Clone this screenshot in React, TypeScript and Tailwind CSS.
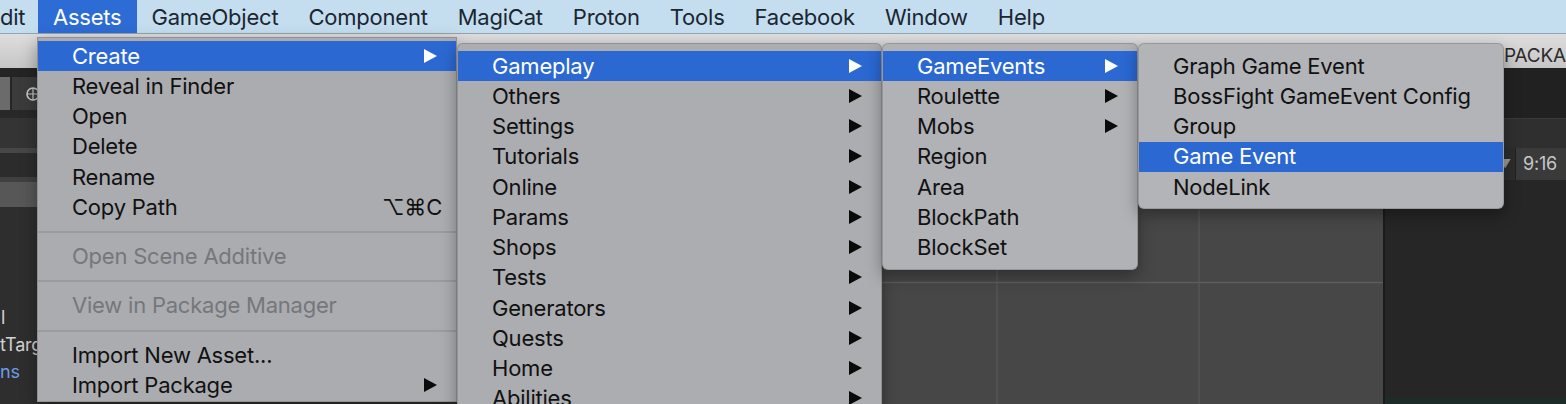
import React from "react";

type Entry =
  | "sep"
  | {
      label: string;
      sub?: boolean;
      active?: boolean;
      disabled?: boolean;
      shortcut?: string;
    };

const assetsMenu: Entry[] = [
  { label: "Create", sub: true, active: true },
  { label: "Reveal in Finder" },
  { label: "Open" },
  { label: "Delete" },
  { label: "Rename" },
  { label: "Copy Path", shortcut: "⌥⌘C" },
  "sep",
  { label: "Open Scene Additive", disabled: true },
  "sep",
  { label: "View in Package Manager", disabled: true },
  "sep",
  { label: "Import New Asset..." },
  { label: "Import Package", sub: true },
];

const createMenu: Entry[] = [
  { label: "Gameplay", sub: true, active: true },
  { label: "Others", sub: true },
  { label: "Settings", sub: true },
  { label: "Tutorials", sub: true },
  { label: "Online", sub: true },
  { label: "Params", sub: true },
  { label: "Shops", sub: true },
  { label: "Tests", sub: true },
  { label: "Generators", sub: true },
  { label: "Quests", sub: true },
  { label: "Home", sub: true },
  { label: "Abilities", sub: true },
];

const gameplayMenu: Entry[] = [
  { label: "GameEvents", sub: true, active: true },
  { label: "Roulette", sub: true },
  { label: "Mobs", sub: true },
  { label: "Region" },
  { label: "Area" },
  { label: "BlockPath" },
  { label: "BlockSet" },
];

const gameEventsMenu: Entry[] = [
  { label: "Graph Game Event" },
  { label: "BossFight GameEvent Config" },
  { label: "Group" },
  { label: "Game Event", active: true },
  { label: "NodeLink" },
];

const menuBar = ["Assets", "GameObject", "Component", "MagiCat", "Proton", "Tools", "Facebook", "Window", "Help"];

function Arrow({ white }: { white?: boolean }) {
  return (
    <svg width="13" height="14" viewBox="0 0 13 14" className="shrink-0">
      <polygon points="0,0 13,7 0,14" fill={white ? "#ffffff" : "#0a0a0a"} />
    </svg>
  );
}

function Menu({ items, className }: { items: Entry[]; className: string }) {
  return (
    <div className={`absolute shadow-[0_6px_16px_rgba(0,0,0,0.35)] border border-black/15 ${className}`}>
      {items.map((it, i) =>
        it === "sep" ? (
          <div key={i} className="flex h-[19px] items-center">
            <div className="h-[2px] w-full bg-[#9a9b9e]" />
          </div>
        ) : (
          <div
            key={i}
            className={`flex h-[30.25px] items-center pb-[1px] pl-[34px] pr-[19px] ${
              it.active ? "bg-[#2b68d2] text-white" : it.disabled ? "text-[#75777b]" : "text-[#111111]"
            }`}
          >
            <span className="flex-1 whitespace-nowrap">{it.label}</span>
            {it.shortcut && <span className="-mr-[5px] whitespace-nowrap">{it.shortcut}</span>}
            {it.sub && <Arrow white={it.active} />}
          </div>
        )
      )}
    </div>
  );
}

export default function App() {
  return (
    <div className="relative h-[404px] w-[1566px] overflow-hidden bg-[#262626] font-['Inter',sans-serif] text-[22px] leading-none tracking-[-0.01em]">
      {/* mac menu bar */}
      <div className="flex h-[34px] items-stretch border-b border-[#93a3b0] bg-[#c4def0] text-[#1b2631]">
        <div className="flex w-[38px] items-center">dit</div>
        {menuBar.map((m) => (
          <div
            key={m}
            className={`flex items-center px-[15px] ${m === "Assets" ? "bg-[#2d6cd5] text-white" : ""}`}
          >
            {m}
          </div>
        ))}
      </div>

      {/* unity toolbar */}
      <div className="flex h-[34px] items-center bg-gradient-to-b from-[#dedede] to-[#c6c6c6] pt-[8px] text-[19px] text-[#2b2b2b]">
        <div className="flex-1" />
        <div className="w-[62px] overflow-hidden whitespace-nowrap">PACKA</div>
      </div>

      {/* editor body */}
      <div className="flex h-[336px]">
        {/* hierarchy */}
        <div className="flex w-[457px] flex-col bg-[#2e2e2e] text-[18px]">
          <div className="h-[9px] bg-[#242424]" />
          <div className="flex h-[33px] gap-[2px] bg-[#262626]">
            <div className="w-[10px] bg-[#6b6b6b]" />
            <div className="flex flex-1 items-center bg-[#3b3b3b] pl-[13px]">
              <svg width="16" height="16" viewBox="0 0 16 16">
                <circle cx="8" cy="8" r="6" fill="none" stroke="#c9c9c9" strokeWidth="1.6" />
                <path d="M2 8h12M8 2v12" stroke="#c9c9c9" strokeWidth="1.2" />
              </svg>
            </div>
          </div>
          <div className="h-[8px] bg-[#282828]" />
          <div className="h-[35px] border-b-[5px] border-[#474747] bg-[#343434]" />
          <div className="h-[29px] border-b-[5px] border-[#404040] bg-[#2c2c2c]" />
          <div className="h-[25px] bg-[#575757]" />
          <div className="flex flex-col pt-[97px] text-[#d2d2d2]">
            <div className="flex h-[27px] items-center pl-[1px]">l</div>
            <div className="flex h-[27px] items-center">tTarg</div>
            <div className="flex h-[27px] items-center text-[#6d9de8]">ns</div>
          </div>
        </div>

        {/* scene view */}
        <div className="relative flex-1 bg-[#474747]">
          <svg className="absolute inset-0 h-full w-full">
            <line x1="540" y1="0" x2="540" y2="336" stroke="#5c5c5c" strokeWidth="1" />
            <line x1="742" y1="0" x2="742" y2="336" stroke="#5c5c5c" strokeWidth="1" />
            <line x1="0" y1="214.5" x2="926" y2="214.5" stroke="#5c5c5c" strokeWidth="1.5" />
          </svg>
        </div>
        <div className="w-[2px] bg-[#1b1b1b]" />

        {/* game view */}
        <div className="flex w-[181px] flex-col bg-[#262626] text-[18px]">
          <div className="h-[50px] bg-[#212121]" />
          <div className="h-[30px] border-t border-[#3a3a3a] bg-[#2f2f2f]" />
          <div className="flex h-[32px] items-stretch justify-end bg-[#2d2d2d]">
            <div className="flex items-center pr-[4px] text-[12px] text-[#9a9a9a]">▼</div>
            <div className="flex w-[51px] items-center border-l border-[#202020] bg-[#3a3a3a] pl-[7px] text-[#c8c8c8]">
              9:16
            </div>
          </div>
          <div className="flex-1" />
          <div className="h-[6px] bg-[#1d2c28]" />
        </div>
      </div>

      {/* menus */}
      <Menu items={assetsMenu} className="left-[37px] top-[37px] w-[420px] bg-[#abacaf] pt-[3px]" />
      <Menu items={createMenu} className="left-[457px] top-[43px] w-[425px] rounded-t-[6px] bg-[#acadb0] pt-[7px]" />
      <Menu items={gameplayMenu} className="left-[882px] top-[43px] w-[256px] overflow-hidden rounded-[6px] bg-[#b0b2b5] pb-[6px] pt-[7px]" />
      <Menu items={gameEventsMenu} className="left-[1138px] top-[43px] w-[366px] overflow-hidden rounded-[6px] bg-[#b2b4b7] pb-[6px] pt-[7px]" />
    </div>
  );
}
